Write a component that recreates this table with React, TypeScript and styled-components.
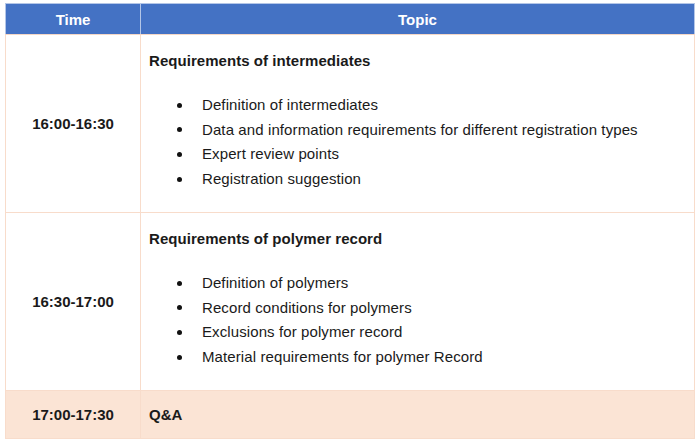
import styled, { createGlobalStyle } from "styled-components";

const GlobalStyle = createGlobalStyle`
    body {
        margin: 0;
        background: #ffffff;
        font-family: "Liberation Sans", Arial, sans-serif;
        color: #1a1a1a;
    }
`;

const Page = styled.div`
    padding: 3px 5px;
`;

const Table = styled.table`
    width: 690px;
    border-collapse: collapse;
    table-layout: fixed;
    font-size: 15px;
`;

const HeadCell = styled.th`
    height: 30px;
    padding: 0;
    background: #4472c4;
    color: #ffffff;
    font-weight: bold;
    text-align: center;
    border: 1px solid #b4c6e7;
    border-bottom: 1px solid #f4d7c6;
`;

const Row = styled.tr<{ $shaded?: boolean }>`
    background: ${p => (p.$shaded ? "#fbe4d5" : "#ffffff")};
`;

const TimeCell = styled.td<{ $h: number }>`
    height: ${p => p.$h}px;
    padding: 0;
    text-align: center;
    vertical-align: middle;
    font-weight: bold;
    border: 1px solid #f8dccb;
`;

const TopicCell = styled.td<{ $plain?: boolean }>`
    padding: ${p => (p.$plain ? "0 8px" : "14px 8px 0")};
    vertical-align: ${p => (p.$plain ? "middle" : "top")};
    border: 1px solid #f8dccb;
`;

const Heading = styled.div`
    font-weight: bold;
    line-height: 24px;
    margin-bottom: 20px;
    letter-spacing: 0.05px;
`;

const Bullets = styled.ul`
    list-style: none;
    margin: 0;
    padding: 0;
`;

const Bullet = styled.li`
    display: flex;
    align-items: center;
    line-height: 24.6px;
    letter-spacing: 0.1px;

    &::before {
        content: "";
        width: 5px;
        height: 5px;
        border-radius: 50%;
        background: #111111;
        margin: 0 20px 0 28px;
        flex: none;
    }
`;

const sessions = [
    {
        time: "16:00-16:30",
        title: "Requirements of intermediates",
        items: [
            "Definition of intermediates",
            "Data and information requirements for different registration types",
            "Expert review points",
            "Registration suggestion",
        ],
    },
    {
        time: "16:30-17:00",
        title: "Requirements of polymer record",
        items: [
            "Definition of polymers",
            "Record conditions for polymers",
            "Exclusions for polymer record",
            "Material requirements for polymer Record",
        ],
    },
];

export default function App() {
    return (
        <Page>
            <GlobalStyle />
            <Table>
                <colgroup>
                    <col style={{ width: 135 }} />
                    <col />
                </colgroup>
                <thead>
                    <tr>
                        <HeadCell>Time</HeadCell>
                        <HeadCell>Topic</HeadCell>
                    </tr>
                </thead>
                <tbody>
                    {sessions.map(s => (
                        <Row key={s.time}>
                            <TimeCell $h={177}>{s.time}</TimeCell>
                            <TopicCell>
                                <Heading>{s.title}</Heading>
                                <Bullets>
                                    {s.items.map(item => (
                                        <Bullet key={item}>{item}</Bullet>
                                    ))}
                                </Bullets>
                            </TopicCell>
                        </Row>
                    ))}
                    <Row $shaded>
                        <TimeCell $h={47}>17:00-17:30</TimeCell>
                        <TopicCell $plain>
                            <b>Q&amp;A</b>
                        </TopicCell>
                    </Row>
                </tbody>
            </Table>
        </Page>
    );
}
